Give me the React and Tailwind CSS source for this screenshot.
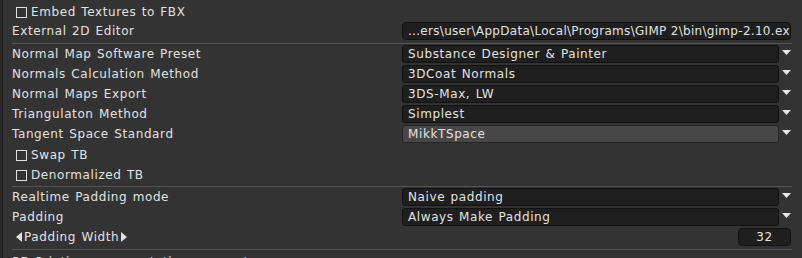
import React from "react";

const font = { fontFamily: '"DejaVu Sans", sans-serif' };

function Arrow() {
    return (
        <svg width="9" height="6" viewBox="0 0 9 6" className="ml-[3px] -mt-[3px] shrink-0">
            <path d="M0 0 H9 L4.5 5 Z" fill="#e6e6e6" />
        </svg>
    );
}

function Checkbox({ label }) {
    return (
        <div className="h-[20px] shrink-0 flex items-center pl-[16px]">
            <span className="w-[11px] h-[11px] border border-[#e0e0e0] mr-[4px] shrink-0" />
            <span>{label}</span>
        </div>
    );
}

function Combo({ label, value, light }) {
    return (
        <div className="h-[20px] shrink-0 flex">
            <div className="w-[402px] pl-[12px] h-[18px] flex items-center">{label}</div>
            <div className="flex items-center h-[18px]">
                <div className={"w-[377px] h-[18px] flex items-center pl-[5px] border rounded-[3px] " +
                    (light ? "bg-[#474747] border-[#262626]" : "bg-[#1f1f1f] border-[#121212]")}>
                    {value}
                </div>
                <Arrow />
            </div>
        </div>
    );
}

function Sep() {
    return (
        <div className="h-[3px] shrink-0 flex items-center pl-[12px] pr-[10px]">
            <div className="h-px w-full bg-[#545454]" />
        </div>
    );
}

export default function App() {
    return (
        <div className="w-[802px] h-[258px] bg-[#333333] text-[#e2e2e2] text-[12px] tracking-[0.6px] [word-spacing:1px] overflow-hidden flex" style={font}>
            <div className="w-[3px] h-full bg-[#2a2a2a] border-r border-[#1c1c1c] shrink-0" />
            <div className="flex-1 -ml-[3px] pt-[2px] flex flex-col">
                <Checkbox label="Embed Textures to FBX" />

                <div className="h-[20px] shrink-0 flex">
                    <div className="w-[402px] pl-[12px] h-[18px] flex items-center">External 2D Editor</div>
                    <div className="w-[389px] h-[18px] bg-[#1f1f1f] border border-[#121212] rounded-[4px] pl-[5px] flex items-center overflow-hidden whitespace-nowrap tracking-[0.3px] [word-spacing:0px]">
                        ...ers\user\AppData\Local\Programs\GIMP 2\bin\gimp-2.10.ex
                    </div>
                </div>

                <Sep />

                <Combo label="Normal Map Software Preset" value="Substance Designer & Painter" />
                <Combo label="Normals Calculation Method" value="3DCoat Normals" />
                <Combo label="Normal Maps Export" value="3DS-Max, LW" />
                <Combo label="Triangulaton Method" value="Simplest" />
                <Combo label="Tangent Space Standard" value="MikkTSpace" light />
                <Checkbox label="Swap TB" />
                <Checkbox label="Denormalized TB" />

                <Sep />

                <Combo label="Realtime Padding mode" value="Naive padding" />
                <Combo label="Padding" value="Always Make Padding" />

                <div className="h-[20px] shrink-0 flex">
                    <div className="w-[738px] pl-[16px] h-[18px] flex items-center">
                        <svg width="6" height="10" viewBox="0 0 6 10" className="mr-[2px]">
                            <path d="M6 0 V10 L0 5 Z" fill="#e2e2e2" />
                        </svg>
                        <span>Padding Width</span>
                        <svg width="6" height="10" viewBox="0 0 6 10" className="ml-[2px]">
                            <path d="M0 0 V10 L6 5 Z" fill="#e2e2e2" />
                        </svg>
                    </div>
                    <div className="w-[53px] h-[18px] bg-[#1f1f1f] border border-[#121212] rounded-[4px] flex items-center justify-center">32</div>
                </div>

                <Sep />

                <div className="h-[20px] shrink-0 pl-[12px] pt-[2px] whitespace-nowrap">3D Printing representation parameters</div>
            </div>
        </div>
    );
}
